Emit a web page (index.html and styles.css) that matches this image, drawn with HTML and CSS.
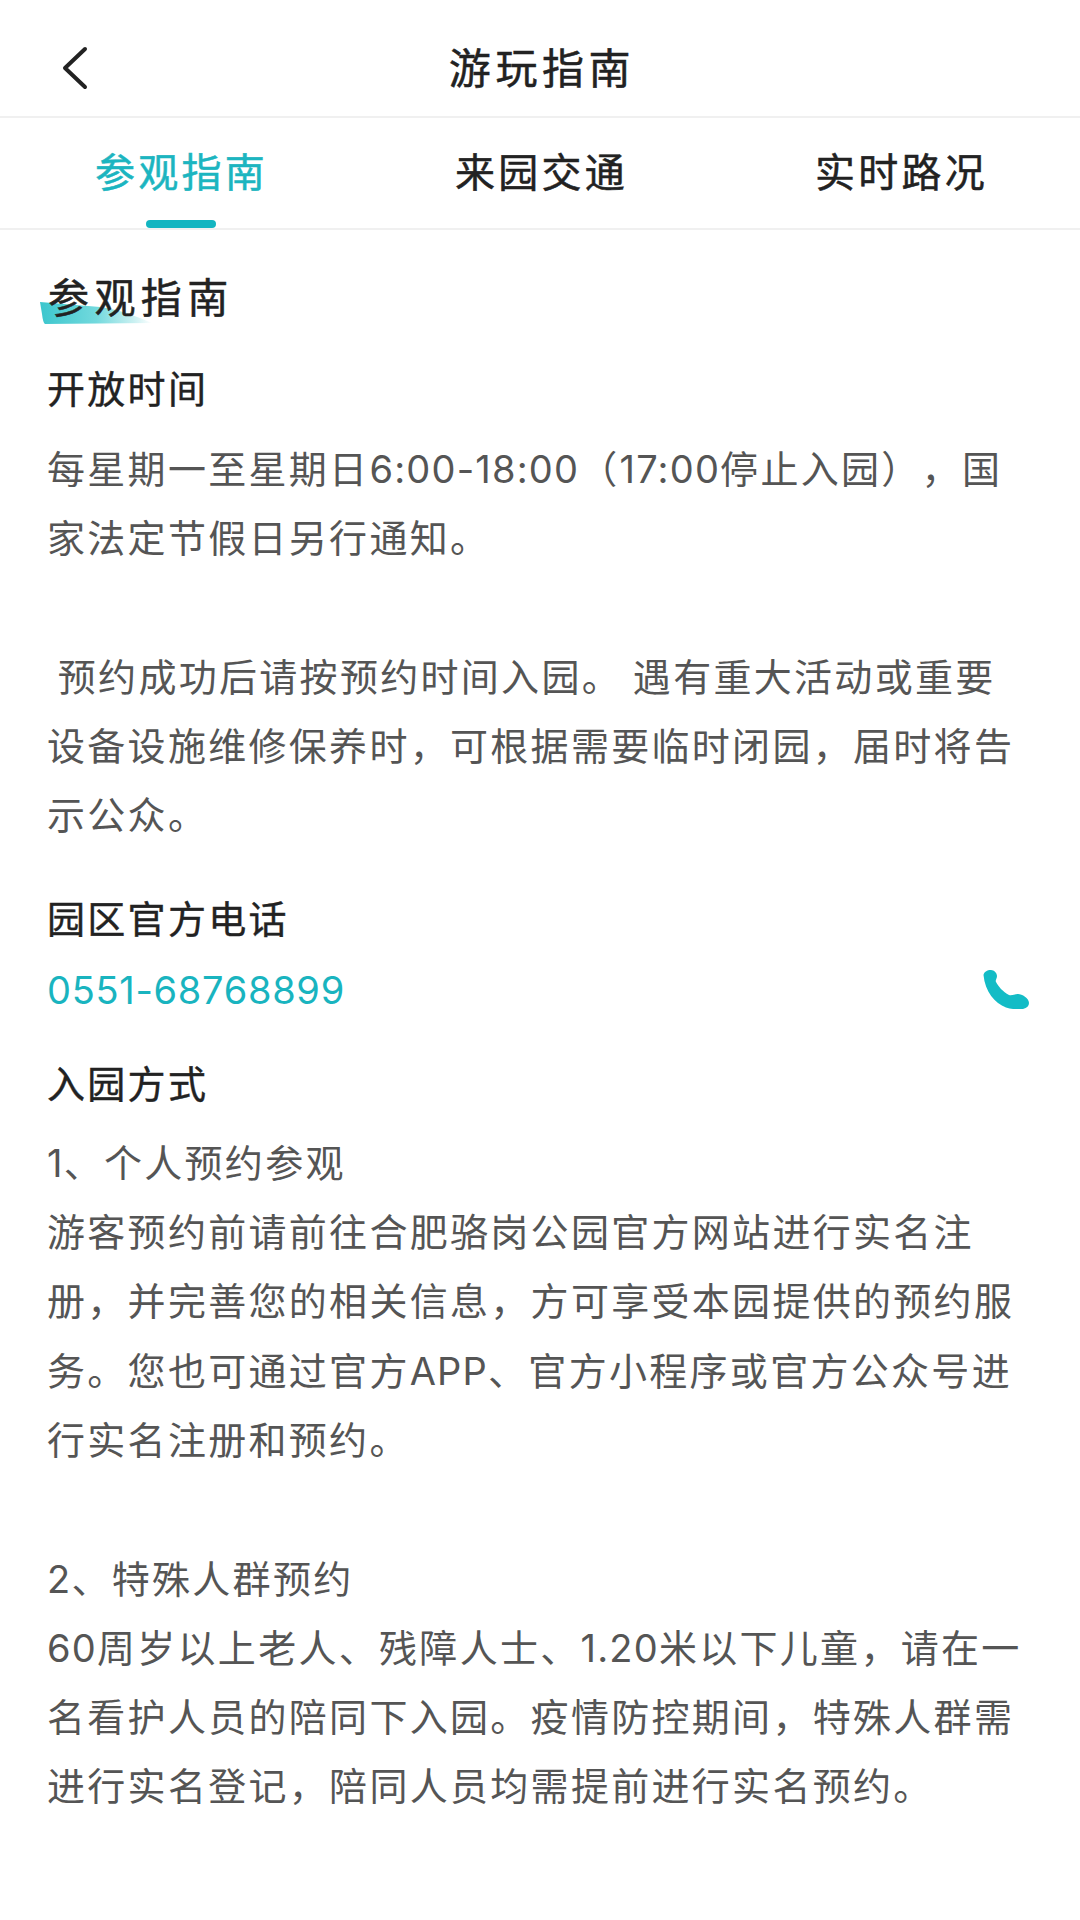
FILE: index.html
```html
<!DOCTYPE html>
<html lang="zh-CN">
<head>
<meta charset="utf-8">
<title>游玩指南</title>
<link rel="stylesheet" href="styles.css">
</head>
<body>
<header class="topbar">
  <svg class="back" width="30" height="44" viewBox="0 0 30 44"><path d="M27 3 L7 22 L27 41" fill="none" stroke="#222" stroke-width="4" stroke-linecap="round" stroke-linejoin="round"/></svg>
  <h1 class="title">游玩指南</h1>
</header>
<nav class="tabs">
  <div class="tab active">参观指南<span class="tab-bar"></span></div>
  <div class="tab">来园交通</div>
  <div class="tab">实时路况</div>
</nav>
<main class="content">
  <h2 class="heading"><svg class="brush" width="112" height="22" viewBox="0 0 112 22"><defs><linearGradient id="bg"><stop offset="0" stop-color="#3cc6cd"/><stop offset="0.5" stop-color="#72d9dd"/><stop offset="0.85" stop-color="#cdf1f2"/><stop offset="1" stop-color="#fff"/></linearGradient></defs><path d="M0 0 C20 2 40 3 60 5 C80 8 96 14 112 21 L5 22 Q3 21 2 12 Z" fill="url(#bg)"/></svg><span class="heading-text">参观指南</span></h2>
  <h3 class="sub">开放时间</h3>
  <div class="body">
    <div class="line">每星期一至星期日<span class="num">6:00-18:00</span>（<span class="num">17:00</span>停止入园），国</div>
    <div class="line">家法定节假日另行通知。</div>
    <div class="line">&nbsp;</div>
    <div class="line">&nbsp;预约成功后请按预约时间入园。 遇有重大活动或重要</div>
    <div class="line">设备设施维修保养时，可根据需要临时闭园，届时将告</div>
    <div class="line">示公众。</div>
  </div>
  <h3 class="sub phone-title">园区官方电话</h3>
  <div class="phone-row">
    <span class="phone">0551-68768899</span>
    <svg class="phone-icon" width="46" height="39" viewBox="0 0 46 39"><path d="M0.5 5 C1 2 4 0 8 0 C11 0 14 3 14 6 C14 9 12 10 13 12 C15 16 20 22 26 25 C29 26 31 24 35 24 C39 24 46 28 46 33 C46 36 44 38 40 39 C36 39.5 29 39.5 23 37.5 C12 33 2 22 0.5 5 Z" fill="#13bcc6"/></svg>
  </div>
  <h3 class="sub ways-title">入园方式</h3>
  <div class="body ways">
    <div class="line"><span class="num">1</span>、个人预约参观</div>
    <div class="line">游客预约前请前往合肥骆岗公园官方网站进行实名注</div>
    <div class="line">册，并完善您的相关信息，方可享受本园提供的预约服</div>
    <div class="line">务。您也可通过官方<span class="num">APP</span>、官方小程序或官方公众号进</div>
    <div class="line">行实名注册和预约。</div>
    <div class="line">&nbsp;</div>
    <div class="line"><span class="num">2</span>、特殊人群预约</div>
    <div class="line"><span class="num">60</span>周岁以上老人、残障人士、<span class="num">1.20</span>米以下儿童，请在一</div>
    <div class="line">名看护人员的陪同下入园。疫情防控期间，特殊人群需</div>
    <div class="line">进行实名登记，陪同人员均需提前进行实名预约。</div>
  </div>
</main>
</body>
</html>
```
FILE: styles.css
```css
* { box-sizing: border-box; }
html, body { margin: 0; padding: 0; }
body {
  width: 1080px;
  height: 1920px;
  background: #fff;
  overflow: hidden;
  font-family: "Noto Sans CJK SC", "Noto Sans", sans-serif;
  color: #222;
  text-spacing-trim: space-all;
}
.topbar {
  height: 118px;
  padding-left: 4px;
  display: flex;
  align-items: center;
  justify-content: center;
  position: relative;
  border-bottom: 2px solid #f0f0f0;
}
.back { position: absolute; left: 58px; top: 46px; }
.title { margin: 16px 0 0; font-size: 42px; line-height: 60px; font-weight: 400; letter-spacing: 4.6px; -webkit-text-stroke: 0.5px #222; }
.tabs {
  height: 112px;
  display: grid;
  grid-template-columns: 360px 360px 360px;
  border-bottom: 2px solid #f0f0f0;
}
.tab {
  position: relative;
  padding-left: 3px;
  text-align: center;
  font-size: 40px;
  line-height: 105px;
  font-weight: 400;
  letter-spacing: 3.3px;
  -webkit-text-stroke: 0.5px currentColor;
}
.tab.active { color: #1cb5c0; }
.tab-bar {
  position: absolute;
  left: 146px;
  bottom: 0;
  width: 70px;
  height: 8px;
  border-radius: 4px;
  background: #13b5c1;
}
.content { padding: 0 47px; }
.heading {
  position: relative;
  margin: 35px 0 0 1px;
  font-size: 41px;
  line-height: 60px;
  font-weight: 400;
  letter-spacing: 5.4px;
  -webkit-text-stroke: 0.5px #222;
}
.brush { position: absolute; left: -8px; top: 37px; }
.heading-text { position: relative; }
.sub { margin: 36px 0 0; font-size: 38px; line-height: 52px; font-weight: 400; letter-spacing: 2.3px; -webkit-text-stroke: 0.4px #222; }
.body { margin: 19px 0 0; font-size: 38px; line-height: 69.3px; color: #555; letter-spacing: 2.3px; }
.line { white-space: nowrap; }
.num { font-family: Inter, sans-serif; font-size: 38px; line-height: 0; letter-spacing: 1.2px; }
.phone-title { margin-top: 43px; }
.phone-row { display: flex; justify-content: space-between; align-items: center; margin-top: 17px; height: 60px; padding-right: 4px; }
.phone { font-family: Inter, sans-serif; font-size: 38px; letter-spacing: 0.7px; color: #19b4bf; }
.phone-icon { flex: none; }
.ways-title { margin-top: 36px; }
.ways { margin-top: 18px; }
```
